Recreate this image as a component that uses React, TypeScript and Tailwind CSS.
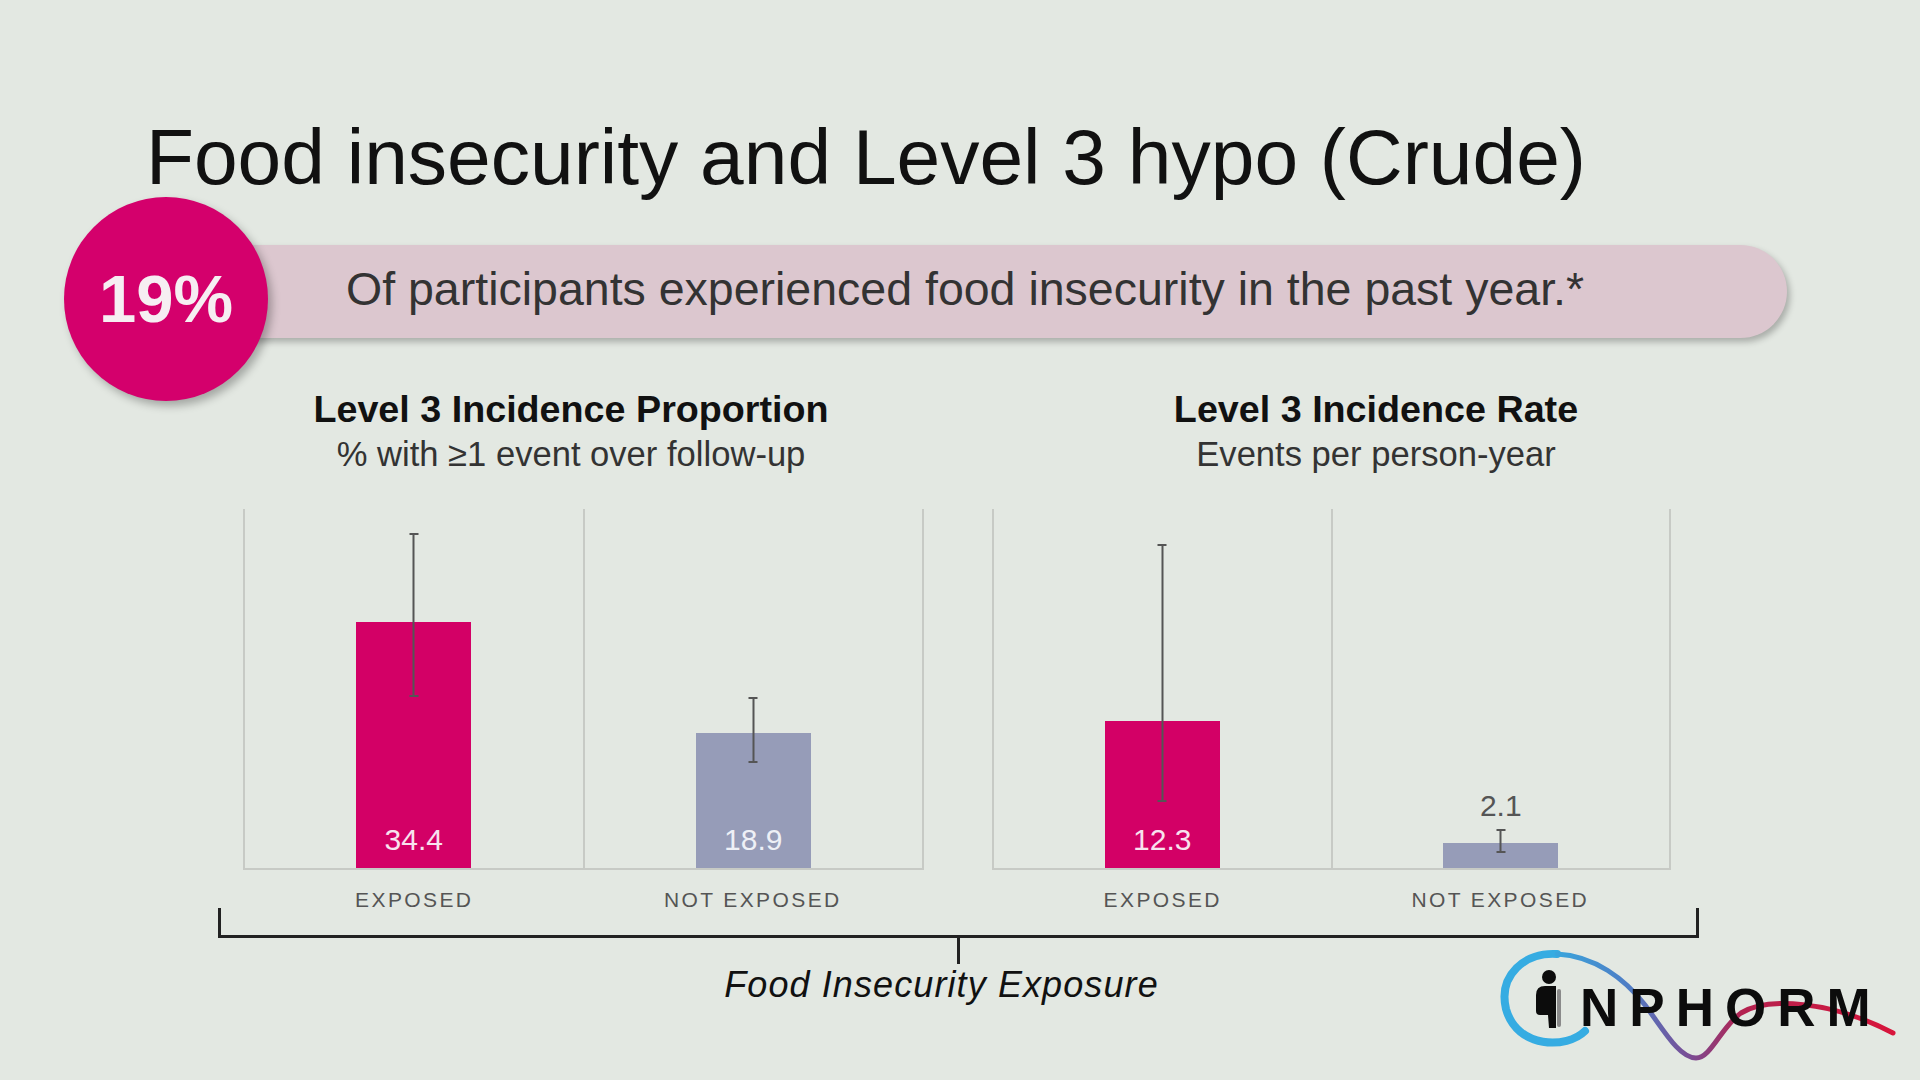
import React from "react";

type Bar = {
  value: string;
  h: number;
  err: [number, number];
  tone: "pink" | "gray";
  labelAbove?: boolean;
};

const proportion: Bar[] = [
  { value: "34.4", h: 246, err: [171, 335], tone: "pink" },
  { value: "18.9", h: 135, err: [105, 171], tone: "gray" },
];

const rate: Bar[] = [
  { value: "12.3", h: 147, err: [66, 324], tone: "pink" },
  { value: "2.1", h: 25, err: [15, 39], tone: "gray", labelAbove: true },
];

const BarCell = ({ bar, divider }: { bar: Bar; divider?: boolean }) => (
  <div
    className={`relative flex flex-1 flex-col items-center justify-end ${
      divider ? "border-r-2 border-[#c7cac5]" : ""
    }`}
  >
    {bar.labelAbove && (
      <span className="mb-[22px] text-[30px] leading-none text-[#555]">
        {bar.value}
      </span>
    )}
    <div
      className={`flex w-[115px] flex-col items-center justify-end ${
        bar.tone === "pink" ? "bg-[#d30066]" : "bg-[#969cb8]"
      }`}
      style={{ height: bar.h }}
    >
      {!bar.labelAbove && (
        <span
          className={`pb-[13px] text-[30px] leading-none ${
            bar.tone === "pink" ? "text-[#f8e2ee]" : "text-[#eef0f6]"
          }`}
        >
          {bar.value}
        </span>
      )}
    </div>
    {/* error bar */}
    <div
      className="absolute left-1/2 flex w-[9px] -translate-x-1/2 flex-col items-center"
      style={{ bottom: bar.err[0], height: bar.err[1] - bar.err[0] }}
    >
      <div className="h-[2px] w-full bg-[#555]" />
      <div className="w-[2px] flex-1 bg-[#555]" />
      <div className="h-[2px] w-full bg-[#555]" />
    </div>
  </div>
);

const Chart = ({ bars, width }: { bars: Bar[]; width: string }) => (
  <div className={`flex flex-col ${width}`}>
    <div className="flex h-[361px] border-x-2 border-b-2 border-[#c7cac5]">
      <BarCell bar={bars[0]} divider />
      <BarCell bar={bars[1]} />
    </div>
    <div className="mt-[19px] flex px-[2px] text-[21px] leading-none tracking-[2.4px] text-[#555]">
      <span className="flex-1 text-center">EXPOSED</span>
      <span className="flex-1 text-center">NOT EXPOSED</span>
    </div>
  </div>
);

const Logo = () => (
  <svg
    width="410"
    height="125"
    viewBox="0 0 410 125"
    className="absolute left-[1495px] top-[945px]"
  >
    <defs>
      <linearGradient
        id="wave"
        x1="60"
        y1="0"
        x2="400"
        y2="0"
        gradientUnits="userSpaceOnUse"
      >
        <stop offset="0" stopColor="#3aa6dd" />
        <stop offset="0.22" stopColor="#4f7cc4" />
        <stop offset="0.4" stopColor="#7b4b93" />
        <stop offset="0.55" stopColor="#b3224f" />
        <stop offset="1" stopColor="#d8153b" />
      </linearGradient>
    </defs>
    <path
      d="M 90 86 C 72 104, 22 104, 11 64 C 3 30, 30 7, 62 9"
      fill="none"
      stroke="#36ace2"
      strokeWidth="8"
      strokeLinecap="round"
    />
    <path
      d="M 62 9 C 100 11, 130 34, 150 60 C 168 84, 184 113, 201 113 C 216 113, 226 82, 246 68 C 272 52, 335 55, 398 88"
      fill="none"
      stroke="url(#wave)"
      strokeWidth="5"
      strokeLinecap="round"
    />
    {/* person forming the "I" */}
    <circle cx="54" cy="32" r="7" fill="#0c0c0c" />
    <path
      d="M 41 50 Q 41 41 50 41 L 61 41 L 61 83 L 54 83 L 53 70 L 45 70 Q 41 70 41 66 Z"
      fill="#0c0c0c"
    />
    <rect x="62" y="44" width="4" height="38" rx="2" fill="#8a8a8a" />
    <text
      x="85"
      y="81"
      fontFamily="'Liberation Sans', Arial, sans-serif"
      fontWeight="700"
      fontSize="53"
      letterSpacing="11"
      fill="#0c0c0c"
    >
      NPHORM
    </text>
  </svg>
);

export default function App() {
  return (
    <div className="relative flex h-[1080px] w-[1920px] flex-col overflow-hidden bg-[#e3e8e2] font-['Liberation_Sans',Arial,sans-serif]">
      <h1 className="pl-[146px] pt-[118px] text-[78.5px] font-normal leading-none text-[#111]">
        Food insecurity and Level 3 hypo (Crude)
      </h1>

      {/* banner */}
      <div className="flex h-[204px] pl-[64px]">
        <div className="relative z-10 flex h-[204px] w-[204px] shrink-0 items-center justify-center rounded-full bg-[#d4006c] shadow-[4px_5px_8px_rgba(0,0,0,0.28)]">
          <span className="text-[67px] font-bold leading-none text-[#f6eef2]">
            19%
          </span>
        </div>
        <div className="-ml-[30px] mt-[48px] flex h-[93px] w-[1549px] items-center rounded-r-[47px] bg-[#dcc7cf] pl-[108px] shadow-[3px_4px_6px_rgba(0,0,0,0.25)]">
          <span className="-mt-[3px] text-[46.5px] leading-none text-[#333]">
            Of participants experienced food insecurity in the past year.*
          </span>
        </div>
      </div>

      {/* chart titles */}
      <div className="-mt-[10px] flex gap-[205px] pl-[271px]">
        <div className="flex w-[600px] flex-col items-center">
          <span className="text-[37.7px] font-bold leading-none text-[#111]">
            Level 3 Incidence Proportion
          </span>
          <span className="mt-[9px] text-[34.6px] leading-none text-[#333]">
            % with ≥1 event over follow-up
          </span>
        </div>
        <div className="flex w-[600px] flex-col items-center">
          <span className="text-[37.7px] font-bold leading-none text-[#111]">
            Level 3 Incidence Rate
          </span>
          <span className="mt-[9px] text-[34.6px] leading-none text-[#333]">
            Events per person-year
          </span>
        </div>
      </div>

      {/* charts */}
      <div className="mt-[37px] flex gap-[68px] pl-[243px]">
        <Chart bars={proportion} width="w-[681px]" />
        <Chart bars={rate} width="w-[679px]" />
      </div>

      {/* bracket + axis caption */}
      <div className="-mt-[2px] ml-[218px] flex w-[1481px] flex-col items-center">
        <div className="h-[30px] w-full border-x-[3px] border-b-[3px] border-[#222]" />
        <div className="h-[26px] w-[3px] bg-[#222]" />
        <p className="mt-[3px] pr-[34px] text-[36px] italic leading-none tracking-[1.1px] text-[#111]">
          Food Insecurity Exposure
        </p>
      </div>

      <Logo />
    </div>
  );
}
